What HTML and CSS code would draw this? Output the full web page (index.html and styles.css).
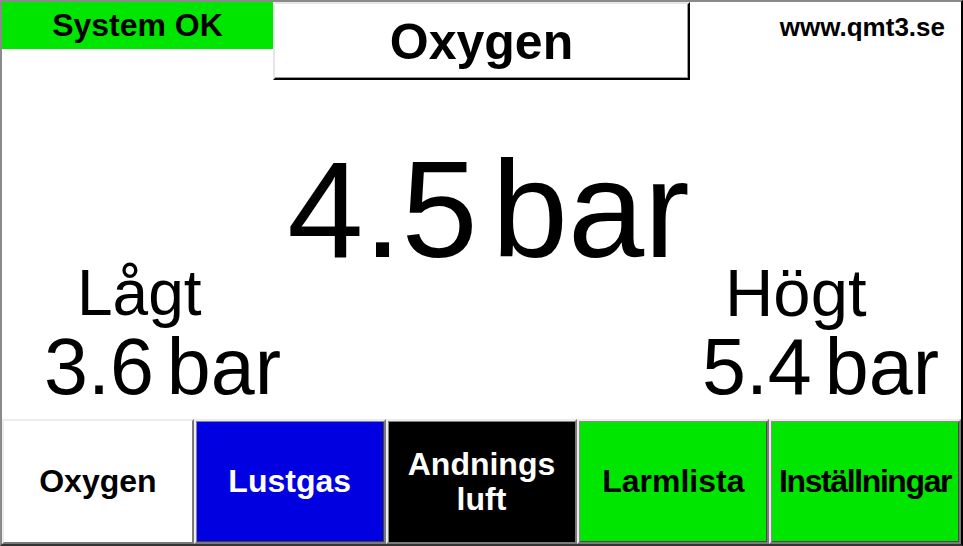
FILE: index.html
```html
<!DOCTYPE html>
<html lang="sv">
<head>
<meta charset="utf-8">
<title>Oxygen</title>
<link rel="stylesheet" href="styles.css">
</head>
<body>
<div class="screen">
  <header class="header">
    <div class="status">System OK</div>
    <div class="title">Oxygen</div>
    <div class="url">www.qmt3.se</div>
  </header>
  <main class="main">
    <div class="big"><span>4.5</span><span>bar</span></div>
    <div class="limits">
      <div class="limit low">
        <div class="limit-label">Lågt</div>
        <div class="limit-value"><span>3.6</span><span>bar</span></div>
      </div>
      <div class="limit high">
        <div class="limit-label">Högt</div>
        <div class="limit-value"><span>5.4</span><span>bar</span></div>
      </div>
    </div>
  </main>
  <nav class="buttons">
    <div class="btn btn-white">Oxygen</div>
    <div class="btn btn-blue">Lustgas</div>
    <div class="btn btn-black">Andnings<br>luft</div>
    <div class="btn btn-green">Larmlista</div>
    <div class="btn btn-green btn-narrow">Inställningar</div>
  </nav>
</div>
</body>
</html>
```

FILE: styles.css
```css
html, body {
  margin: 0;
  padding: 0;
  background: #fff;
}

.screen {
  width: 963px;
  height: 546px;
  box-sizing: border-box;
  border-top: 2px solid #8a8a8a;
  border-left: 2px solid #8a8a8a;
  border-right: 2px solid #000;
  border-bottom: 2px solid #333;
  background: #fff;
  display: flex;
  flex-direction: column;
  font-family: "Liberation Sans", Arial, sans-serif;
  color: #000;
  overflow: hidden;
}

.header {
  display: flex;
  align-items: flex-start;
  height: 78px;
  flex: none;
}

.status {
  width: 271px;
  height: 47px;
  background: #00e600;
  font-weight: bold;
  font-size: 32px;
  line-height: 47px;
  text-align: center;
}

.title {
  width: 417px;
  height: 78px;
  box-sizing: border-box;
  border-top: 2px solid #e6e6e6;
  border-left: 2px solid #e6e6e6;
  border-right: 2px solid #000;
  border-bottom: 2px solid #000;
  box-shadow: inset -1px -1px 0 #9a9a9a;
  font-weight: bold;
  font-size: 50px;
  line-height: 76px;
  text-align: center;
}

.url {
  flex: 1;
  text-align: right;
  padding-right: 16px;
  padding-top: 10px;
  font-weight: bold;
  font-size: 26px;
  line-height: 30px;
}

.main {
  flex: 1;
  display: flex;
  flex-direction: column;
}

.big {
  display: flex;
  justify-content: center;
  gap: 14px;
  padding-left: 14px;
  margin-top: 75px;
  font-size: 137px;
  line-height: 110px;
}

.limits {
  display: flex;
  justify-content: space-between;
}

.limit-label {
  font-size: 64px;
  line-height: 56px;
}

.limit-value {
  display: flex;
  gap: 13px;
  font-size: 79px;
  line-height: 92px;
}

.low {
  padding-left: 42px;
}

.low .limit-label {
  margin-left: 33px;
}

.high {
  padding-right: 22px;
}

.high .limit-label {
  margin-left: 23px;
  font-size: 67px;
}

.buttons {
  flex: none;
  height: 125px;
  display: grid;
  grid-template-columns: repeat(5, 1fr);
}

.btn {
  box-sizing: border-box;
  border-top: 2px solid #ececec;
  border-left: 2px solid #ececec;
  border-right: 2px solid #7a7a7a;
  border-bottom: 2px solid #7a7a7a;
  display: flex;
  align-items: center;
  justify-content: center;
  text-align: center;
  font-weight: bold;
  font-size: 32px;
  line-height: 35px;
}

.btn-narrow {
  letter-spacing: -1.4px;
}

.btn-white {
  background: #fff;
  color: #000;
}

.btn-blue {
  background: #0000e0;
  color: #fff;
  box-shadow: inset 1px 1px 0 #8080a0, inset -1px -1px 0 #404040;
}

.btn-black {
  background: #000;
  color: #fff;
  box-shadow: inset 1px 1px 0 #808080;
}

.btn-green {
  background: #00e600;
  color: #000;
  box-shadow: inset 1px 1px 0 #8a8a8a, inset -1px -1px 0 #4a4a4a;
}
```
